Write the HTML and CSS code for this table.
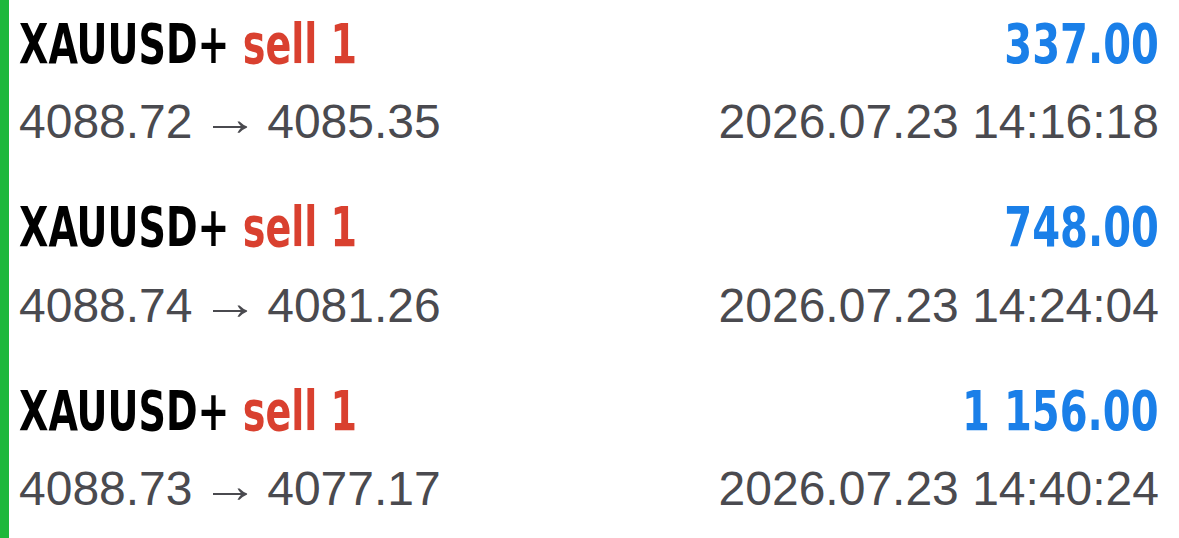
FILE: index.html
```html
<!DOCTYPE html>
<html lang="en">
<head>
    <meta charset="UTF-8">
    <meta name="viewport" content="width=device-width, initial-scale=1.0">
    <title>History</title>
    <link rel="stylesheet" href="styles.css">
</head>
<body>
    <div class="list">
        <div class="deal">
            <div class="deal-top">
                <span class="symbol">XAUUSD+ <span class="side">sell 1</span></span>
                <span class="profit">337.00</span>
            </div>
            <div class="deal-bottom">
                <span>4088.72 <span class="arrow">&rarr;</span> 4085.35</span>
                <span>2026.07.23 14:16:18</span>
            </div>
        </div>
        <div class="deal">
            <div class="deal-top">
                <span class="symbol">XAUUSD+ <span class="side">sell 1</span></span>
                <span class="profit">748.00</span>
            </div>
            <div class="deal-bottom">
                <span>4088.74 <span class="arrow">&rarr;</span> 4081.26</span>
                <span>2026.07.23 14:24:04</span>
            </div>
        </div>
        <div class="deal">
            <div class="deal-top">
                <span class="symbol">XAUUSD+ <span class="side">sell 1</span></span>
                <span class="profit">1 156.00</span>
            </div>
            <div class="deal-bottom">
                <span>4088.73 <span class="arrow">&rarr;</span> 4077.17</span>
                <span>2026.07.23 14:40:24</span>
            </div>
        </div>
    </div>
</body>
</html>
```

FILE: styles.css
```css
body {
    margin: 0;
    background-color: #fff;
    font-family: "Liberation Sans", Arial, sans-serif;
}
.list {
    border-left: 9px solid #1db83b;
    padding: 0 20px 0 10px;
    height: 538px;
    box-sizing: border-box;
    overflow: hidden;
}
.deal {
    height: 183.5px;
    padding-top: 6.5px;
    box-sizing: border-box;
}
.deal-top {
    display: flex;
    justify-content: space-between;
    font-family: "DejaVu Sans Condensed", "DejaVu Sans", sans-serif;
    font-weight: bold;
    font-size: 55px;
    line-height: 75px;
    color: #000;
}
/* the app font is narrower than anything installed */
.symbol {
    display: inline-block;
    white-space: nowrap;
    transform: scaleX(0.77);
    transform-origin: left center;
}
.side {
    color: #d9402f;
}
.profit {
    display: inline-block;
    white-space: nowrap;
    color: #1a7fe8;
    transform: scaleX(0.81);
    transform-origin: right center;
}
.deal-bottom {
    display: flex;
    justify-content: space-between;
    margin-top: 2.5px;
    font-size: 48px;
    line-height: 75px;
    color: #4a4a4f;
}
.arrow {
    display: inline-block;
    transform: translateY(-3px) scaleX(1.2);
}
```
